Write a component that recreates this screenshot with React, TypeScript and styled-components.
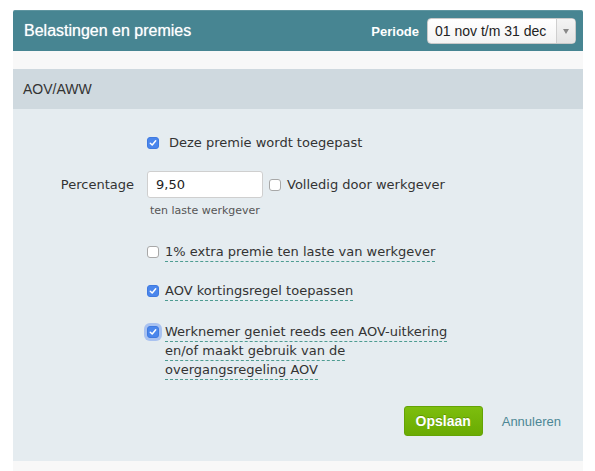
import React from "react";
import styled, { createGlobalStyle, css } from "styled-components";

const GlobalStyle = createGlobalStyle`
  html, body { margin: 0; padding: 0; background: #ffffff; }
  body { font-family: "DejaVu Sans", Verdana, sans-serif; color: #333; }
  * { box-sizing: border-box; }
`;

const Panel = styled.div`
  width: 570px;
  margin: 10px 0 0 13px;
`;

const Header = styled.div`
  height: 41px;
  background: #478592;
  border-top: 1px solid #5f95a0;
  border-radius: 2px 2px 0 0;
  display: flex;
  align-items: center;
  justify-content: space-between;
  padding: 0 7px 0 11px;
`;

const Title = styled.h1`
  margin: 0;
  font-family: "Liberation Sans", Arial, sans-serif;
  font-size: 16px;
  font-weight: normal;
  color: #fff;
  text-shadow: 0 0 1px rgba(255, 255, 255, 0.7);
`;

const PeriodGroup = styled.div`
  display: flex;
  align-items: center;
  gap: 8px;
`;

const PeriodLabel = styled.span`
  font-family: "Liberation Sans", Arial, sans-serif;
  font-size: 13px;
  font-weight: bold;
  color: #fff;
`;

const Select = styled.div`
  width: 149px;
  height: 26px;
  display: flex;
  background: linear-gradient(#ffffff, #f3f3f3);
  border: 1px solid #c9c9c9;
  border-radius: 4px;
  overflow: hidden;
`;

const SelectValue = styled.span`
  flex: 1;
  padding-left: 7px;
  line-height: 24px;
  font-family: "Liberation Sans", Arial, sans-serif;
  font-size: 14px;
  color: #222;
`;

const SelectArrow = styled.span`
  width: 19px;
  border-left: 1px solid #cfcfcf;
  background: linear-gradient(#f4f4f4, #e4e4e4);
  display: flex;
  align-items: center;
  justify-content: center;
  &::after {
    content: "";
    border-left: 3.5px solid transparent;
    border-right: 3.5px solid transparent;
    border-top: 5px solid #888;
    margin-top: 1px;
  }
`;

const Strip = styled.div<{ $h: number }>`
  height: ${(p) => p.$h}px;
  background: #f8f8f8;
`;

const SectionHeader = styled.div`
  height: 40px;
  line-height: 40px;
  padding-left: 10px;
  background: #cfd9df;
  font-family: "Liberation Sans", Arial, sans-serif;
  font-size: 14px;
  color: #333;
`;

const Body = styled.div`
  height: 352px;
  background: #e5ecf0;
  padding: 24px 22px 0 0;
  display: flex;
  flex-direction: column;
`;

const FieldRow = styled.div<{ $mt: number }>`
  display: grid;
  grid-template-columns: 121px 1fr;
  column-gap: 13px;
  align-items: center;
  margin-top: ${(p) => p.$mt}px;
`;

const FieldLabel = styled.label`
  text-align: right;
  font-size: 13px;
  color: #333;
`;

const Cell = styled.div<{ $top?: boolean }>`
  grid-column: 2;
  display: flex;
  align-items: ${(p) => (p.$top ? "flex-start" : "center")};
`;

const Box = styled.span<{ $checked?: boolean; $focused?: boolean }>`
  flex: none;
  width: 12px;
  height: 12px;
  border-radius: 3px;
  display: inline-flex;
  align-items: center;
  justify-content: center;
  background: #fff;
  border: 1px solid #a8a8a8;
  ${(p) =>
    p.$checked &&
    css`
      background: #4a86ec;
      border-color: #3f7ae0;
    `}
  ${(p) =>
    p.$focused &&
    css`
      box-shadow: 0 0 0 3px rgba(120, 160, 240, 0.55);
    `}
`;

const BoxSlot = styled.span`
  display: flex;
  padding-top: 4px;
`;

const CheckText = styled.span<{ $gap: number }>`
  margin-left: ${(p) => p.$gap}px;
  font-size: 13px;
  color: #333;
  line-height: 20px;
`;

const Dashed = styled.span<{ $gap: number }>`
  margin-left: ${(p) => p.$gap}px;
  font-size: 13px;
  color: #333;
  line-height: 19px;
  max-width: 296px;
  span {
    border-bottom: 1px dashed #4e9c92;
    padding-bottom: 2px;
  }
`;

const Input = styled.input`
  width: 116px;
  height: 27px;
  border: 1px solid #cfcfcf;
  border-radius: 3px;
  background: #fff;
  padding: 0 8px;
  font-family: "DejaVu Sans", Verdana, sans-serif;
  font-size: 13px;
  color: #222;
  outline: none;
`;

const InlineCheck = styled.span`
  display: inline-flex;
  align-items: center;
  margin-left: 6px;
`;

const Help = styled.div`
  grid-column: 2;
  margin-top: 6px;
  padding-left: 3px;
  font-size: 11px;
  line-height: 14px;
  color: #555;
`;

const Actions = styled.div`
  margin-top: 27px;
  display: flex;
  justify-content: flex-end;
  align-items: center;
  gap: 19px;
`;

const SaveButton = styled.button`
  width: 79px;
  height: 30px;
  border: 1px solid #64a305;
  border-radius: 3px;
  background: linear-gradient(#7dbe0e, #6aab02);
  color: #fff;
  font-family: "Liberation Sans", Arial, sans-serif;
  font-size: 14px;
  font-weight: bold;
  text-shadow: 0 -1px 0 rgba(0, 0, 0, 0.2);
  cursor: pointer;
`;

const CancelLink = styled.a`
  font-family: "Liberation Sans", Arial, sans-serif;
  font-size: 13px;
  color: #4c8795;
  text-decoration: none;
`;

const Check = () => (
  <svg width="8" height="8" viewBox="0 0 8 8">
    <path d="M1.3 4.2 L3.2 6 L6.7 1.8" fill="none" stroke="#fff" strokeWidth="1.5" strokeLinecap="round" strokeLinejoin="round" />
  </svg>
);

const Checkbox = ({ checked, focused }: { checked?: boolean; focused?: boolean }) => (
  <Box $checked={checked} $focused={focused}>{checked && <Check />}</Box>
);

export default function App() {
  return (
    <>
      <GlobalStyle />
      <Panel>
        <Header>
          <Title>Belastingen en premies</Title>
          <PeriodGroup>
            <PeriodLabel>Periode</PeriodLabel>
            <Select>
              <SelectValue>01 nov t/m 31 dec</SelectValue>
              <SelectArrow />
            </Select>
          </PeriodGroup>
        </Header>
        <Strip $h={18} />
        <SectionHeader>AOV/AWW</SectionHeader>
        <Body>
          <FieldRow $mt={0}>
            <Cell>
              <Checkbox checked />
              <CheckText $gap={10}>Deze premie wordt toegepast</CheckText>
            </Cell>
          </FieldRow>
          <FieldRow $mt={18}>
            <FieldLabel>Percentage</FieldLabel>
            <Cell>
              <Input defaultValue="9,50" />
              <InlineCheck>
                <Checkbox />
                <CheckText $gap={6}>Volledig door werkgever</CheckText>
              </InlineCheck>
            </Cell>
            <Help>ten laste werkgever</Help>
          </FieldRow>
          <FieldRow $mt={24}>
            <Cell>
              <Checkbox />
              <Dashed $gap={6}>
                <span>1% extra premie ten laste van werkgever</span>
              </Dashed>
            </Cell>
          </FieldRow>
          <FieldRow $mt={20}>
            <Cell>
              <Checkbox checked />
              <Dashed $gap={6}>
                <span>AOV kortingsregel toepassen</span>
              </Dashed>
            </Cell>
          </FieldRow>
          <FieldRow $mt={22}>
            <Cell $top>
              <BoxSlot>
                <Checkbox checked focused />
              </BoxSlot>
              <Dashed $gap={6}>
                <span>Werknemer geniet reeds een AOV-uitkering en/of maakt gebruik van de overgangsregeling AOV</span>
              </Dashed>
            </Cell>
          </FieldRow>
          <Actions>
            <SaveButton>Opslaan</SaveButton>
            <CancelLink href="#">Annuleren</CancelLink>
          </Actions>
        </Body>
        <Strip $h={10} />
      </Panel>
    </>
  );
}
